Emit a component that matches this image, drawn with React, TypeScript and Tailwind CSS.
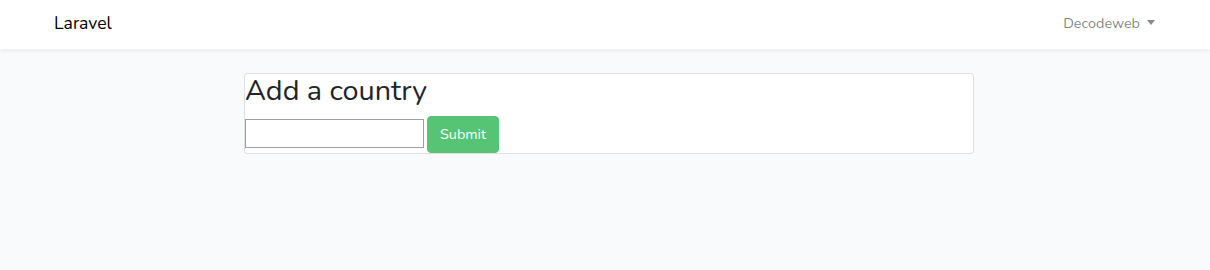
export default function App() {
  return (
    <div className="min-h-[270px] bg-[#f8fafc] font-['Nunito','Lato',sans-serif] text-[14.4px] leading-[1.6] text-[#212529]">
      <nav className="bg-white shadow-[0_2px_4px_rgba(0,0,0,0.06)] h-[49px] flex items-center">
        <div className="w-full flex items-center justify-between pl-[54px] pr-[55px]">
          <a className="text-[17.6px] text-black leading-[1.6] -mt-[2px]">Laravel</a>
          <div className="flex items-center gap-[7px] text-black/50 -mt-[2px]">
            <span>Decodeweb</span>
            <span className="w-0 h-0 border-l-[4px] border-r-[4px] border-t-[5px] border-l-transparent border-r-transparent border-t-[#8a8a8a] -mt-[1px]" />
          </div>
        </div>
      </nav>
      <main className="pt-[24px]">
        <div className="ml-[244px] w-[730px] bg-white border border-black/[0.125] rounded-[4px] h-[81px]">
          <h2 className="text-[28.8px] leading-[35px] h-[35px] font-normal -mt-[1px]">Add a country</h2>
          <form className="flex items-start gap-[3px] mt-[8px]">
            <input type="text" className="w-[179px] h-[29px] mt-[3px] border border-[#a0a0a0] bg-white" />
            <button type="button" className="bg-[#56c375] text-white rounded-[4px] w-[72px] h-[37px] border border-[#56c375]">
              Submit
            </button>
          </form>
        </div>
      </main>
    </div>
  );
}
